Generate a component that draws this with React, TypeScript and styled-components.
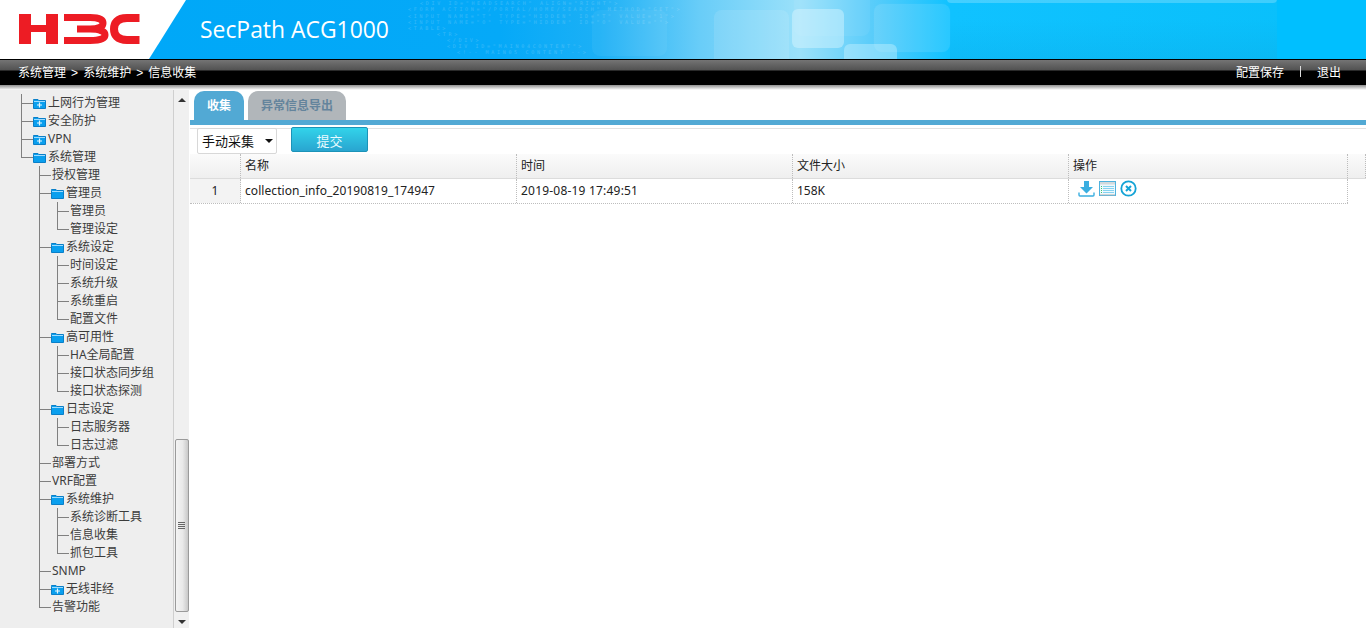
import React from "react";
import styled, { createGlobalStyle } from "styled-components";

const Global = createGlobalStyle`
  html, body { margin: 0; padding: 0; height: 100%; overflow: hidden; background: #fff; }
  body { font-family: "Noto Sans", "Noto Sans CJK SC", sans-serif; font-size: 12px; color: #222; }
  #root { height: 100%; }
`;

const Page = styled.div`
  display: flex;
  flex-direction: column;
  height: 628px;
  width: 1366px;
  overflow: hidden;
`;

const Banner = styled.header`
  position: relative;
  height: 59px;
  flex: none;
  background: #fff;
`;
const BannerArt = styled.svg`
  display: block;
`;
const ProductName = styled.h1`
  position: absolute;
  left: 200px;
  top: 13px;
  margin: 0;
  font: 400 22.9px/34px "Open Sans", sans-serif;
  color: #fff;
`;

const CrumbBar = styled.nav`
  flex: none;
  height: 26px;
  box-sizing: border-box;
  border-top: 1px solid #000;
  background: linear-gradient(#747474 0, #525252 10px, #000 11px, #000 100%);
  display: flex;
  align-items: center;
  justify-content: space-between;
  padding: 0 25px 0 18px;
  color: #fff;
  font-family: "Liberation Sans", "Noto Sans CJK SC", sans-serif;
  font-size: 12px;
`;
const Crumbs = styled.span`
  position: relative;
  top: -1px;
  word-spacing: 1.75px;
`;
const BarActions = styled.div`
  display: flex;
  align-items: center;
  position: relative;
  top: -1px;
`;
const Divider = styled.i`
  width: 1px;
  height: 11px;
  background: #ddd;
  margin: 0 16px;
`;
const Shade = styled.div`
  flex: none;
  height: 5px;
  background: linear-gradient(#8f8f8f, #fff);
`;

const Content = styled.div`
  flex: 1;
  display: flex;
  min-height: 0;
`;

const Side = styled.aside`
  width: 189px;
  flex: none;
  display: flex;
  background: #eeeeee;
  margin-right: 1px;
`;
const Tree = styled.ul`
  list-style: none;
  margin: 0;
  padding: 4px 0 0 21px;
  width: 152px;
  flex: none;
`;
const Row = styled.li`
  display: flex;
  height: 18px;
  line-height: 17px;
  color: #3c3c3c;
  font-size: 12px;
  white-space: nowrap;
`;
const Guide = styled.span<{ $line?: boolean }>`
  width: 18px;
  flex: none;
  box-sizing: border-box;
  border-left: ${(p) => (p.$line ? "1px solid #808080" : "0")};
`;
const Elbow = styled.span<{ $last?: boolean; $gap: number }>`
  position: relative;
  width: 12px;
  margin-right: ${(p) => p.$gap}px;
  flex: none;
  &::before {
    content: "";
    position: absolute;
    left: 0;
    top: 0;
    width: 1px;
    height: ${(p) => (p.$last ? "10px" : "18px")};
    background: #808080;
  }
  &::after {
    content: "";
    position: absolute;
    left: 0;
    top: 9px;
    width: 12px;
    height: 1px;
    background: #808080;
  }
`;
const FolderSvg = styled.svg`
  flex: none;
  margin: 4px 2px 0 0;
`;

const Scrollbar = styled.div`
  width: 16px;
  margin-left: auto;
  flex: none;
  display: flex;
  flex-direction: column;
  align-items: center;
  box-sizing: border-box;
  border-left: 1px solid #cfcfcf;
  background: #f0f0f0;
`;
const ArrowUp = styled.i`
  margin-top: 8px;
  width: 0;
  height: 0;
  border: 4px solid transparent;
  border-top: 0;
  border-bottom: 4px solid #333;
`;
const Thumb = styled.div`
  margin-top: 337px;
  width: 14px;
  height: 173px;
  flex: none;
  box-sizing: border-box;
  border: 1px solid #9a9a9a;
  border-radius: 2px;
  background: linear-gradient(90deg, #f3f3f3, #e9e9e9 55%, #c8c8c8);
  display: flex;
  flex-direction: column;
  justify-content: center;
  align-items: center;
  gap: 1px;
`;
const Grip = styled.i`
  width: 7px;
  height: 1px;
  background: #666;
`;
const ArrowDown = styled.i`
  margin-top: 8px;
  width: 0;
  height: 0;
  border: 4px solid transparent;
  border-bottom: 0;
  border-top: 4px solid #333;
`;

const Main = styled.main`
  flex: 1;
  min-width: 0;
  display: flex;
  flex-direction: column;
  padding-top: 1px;
`;
const Tabs = styled.div`
  height: 29px;
  display: flex;
  gap: 4px;
  padding-left: 4px;
  flex: none;
`;
const Tab = styled.div<{ $active?: boolean }>`
  width: ${(p) => (p.$active ? 50 : 98)}px;
  border-radius: 10px 10px 0 0;
  background: ${(p) => (p.$active ? "#52a9d4" : "#b1b6ba")};
  color: ${(p) => (p.$active ? "#fff" : "#64849c")};
  font-weight: 700;
  font-size: 12px;
  line-height: 30px;
  text-align: center;
`;
const TabRule = styled.div`
  height: 5px;
  flex: none;
  margin-bottom: 3px;
  background: #52a9d4;
`;
const Toolbar = styled.div`
  height: 26px;
  box-sizing: border-box;
  border-top: 1px solid #e2e2e2;
  flex: none;
  display: flex;
  padding-left: 7px;
  gap: 14px;
`;
const SelectBox = styled.div`
  width: 80px;
  height: 26px;
  margin-top: -1px;
  box-sizing: border-box;
  border: 1px solid #d8d8d8;
  border-radius: 2px;
  background: #fff;
  display: flex;
  align-items: center;
  justify-content: space-between;
  padding: 0 3px 2px 4px;
  font-size: 13px;
  color: #111;
`;
const Caret = styled.i`
  width: 0;
  height: 0;
  margin-top: 2px;
  border: 4px solid transparent;
  border-bottom: 0;
  border-top: 4px solid #111;
`;
const Submit = styled.button`
  width: 77px;
  height: 25px;
  margin-top: -2px;
  box-sizing: border-box;
  padding: 2px 0 0;
  border: 1px solid #1c93b8;
  border-radius: 2px;
  background: linear-gradient(#32d3ea, #29a5d0);
  color: #e8fbff;
  font: 400 13px "Noto Sans CJK SC", sans-serif;
`;

const HeadRow = styled.div`
  display: grid;
  grid-template-columns: 51px 276px 276px 276px 279px 18px;
  height: 25px;
  flex: none;
  box-sizing: border-box;
  background: linear-gradient(#fbfbfb, #efefef);
  border-bottom: 1px solid #dcdcdc;
`;
const HeadCell = styled.div`
  box-sizing: border-box;
  border-right: 1px dotted #bdbdbd;
  padding-left: 4px;
  line-height: 24px;
  color: #222;
`;
const DataRow = styled.div`
  display: grid;
  grid-template-columns: 51px 276px 276px 276px 279px;
  width: 1158px;
  height: 25px;
  flex: none;
  box-sizing: border-box;
  border-bottom: 1px dotted #bdbdbd;
`;
const IndexCell = styled.div`
  box-sizing: border-box;
  background: #f3f3f3;
  border-right: 1px dotted #bdbdbd;
  text-align: center;
  line-height: 24px;
`;
const Cell = styled.div<{ $track?: number }>`
  box-sizing: border-box;
  border-right: 1px dotted #bdbdbd;
  padding-left: 4px;
  line-height: 24px;
  color: #222;
  letter-spacing: ${(p) => p.$track ?? 0}px;
`;
const Actions = styled.div`
  box-sizing: border-box;
  border-right: 1px dotted #bdbdbd;
  padding: 1px 0 0 9px;
  display: flex;
  align-items: flex-start;
  gap: 4px;
`;

type Node = { t: string; l: 1 | 2 | 3; f?: "open" | "closed"; last?: boolean };
const nodes: Node[] = [
  { t: "上网行为管理", l: 1, f: "closed" },
  { t: "安全防护", l: 1, f: "closed" },
  { t: "VPN", l: 1, f: "closed" },
  { t: "系统管理", l: 1, f: "open", last: true },
  { t: "授权管理", l: 2 },
  { t: "管理员", l: 2, f: "open" },
  { t: "管理员", l: 3 },
  { t: "管理设定", l: 3, last: true },
  { t: "系统设定", l: 2, f: "open" },
  { t: "时间设定", l: 3 },
  { t: "系统升级", l: 3 },
  { t: "系统重启", l: 3 },
  { t: "配置文件", l: 3, last: true },
  { t: "高可用性", l: 2, f: "open" },
  { t: "HA全局配置", l: 3 },
  { t: "接口状态同步组", l: 3 },
  { t: "接口状态探测", l: 3, last: true },
  { t: "日志设定", l: 2, f: "open" },
  { t: "日志服务器", l: 3 },
  { t: "日志过滤", l: 3, last: true },
  { t: "部署方式", l: 2 },
  { t: "VRF配置", l: 2 },
  { t: "系统维护", l: 2, f: "open" },
  { t: "系统诊断工具", l: 3 },
  { t: "信息收集", l: 3 },
  { t: "抓包工具", l: 3, last: true },
  { t: "SNMP", l: 2 },
  { t: "无线非经", l: 2, f: "closed" },
  { t: "告警功能", l: 2, last: true },
];

const Folder = ({ plus }: { plus?: boolean }) => (
  <FolderSvg width="13" height="11" viewBox="0 0 13 11">
    <path d="M0.5 2.5 V1.5 H5 L5.8 2.5 H12.5 V10.5 H0.5 Z" fill="#0a9fee" stroke="#0a7fc8" strokeWidth="1" />
    <rect x="1" y="3" width="11" height="1" fill="#9fdcff" />
    {plus && <path d="M6.5 4.5 V9.5 M4 7 H9" stroke="#e6f7ff" strokeWidth="1.2" />}
  </FolderSvg>
);

const TreeRow = ({ n }: { n: Node }) => (
  <Row>
    {n.l >= 2 && <Guide />}
    {n.l === 3 && <Guide $line />}
    <Elbow $last={n.last} $gap={n.f ? 0 : n.l === 1 ? 2 : 1} />
    {n.f && <Folder plus={n.f === "closed"} />}
    <span>{n.t}</span>
  </Row>
);

const DownloadIcon = () => (
  <svg width="17" height="18" viewBox="0 0 17 18">
    <path d="M6 1 H11 V7 H15 L8.5 13.5 L2 7 H6 Z" fill="#3aaee0" />
    <path d="M1 12.5 V15 Q1 16 2 16 H15 Q16 16 16 15 V12.5" fill="none" stroke="#3aaee0" strokeWidth="1.4" />
  </svg>
);
const ListIcon = () => (
  <svg width="17" height="16" viewBox="0 0 17 16" style={{ marginTop: 1 }}>
    <rect x="0.5" y="0.5" width="16" height="14" fill="#eef9fd" stroke="#4fb2de" />
    <rect x="1" y="1" width="15" height="2.5" fill="#a9a9a9" opacity="0.4" />
    <path d="M4 5.5 H15 M4 7.5 H15 M4 9.5 H15 M4 11.5 H15" stroke="#86d2f0" strokeWidth="1" />
    <path d="M2 5.5 H3 M2 7.5 H3 M2 9.5 H3 M2 11.5 H3" stroke="#3fc46a" strokeWidth="1" />
    <rect x="1" y="13" width="15" height="1.5" fill="#bbb" opacity="0.6" />
  </svg>
);
const CloseIcon = () => (
  <svg width="17" height="17" viewBox="0 0 17 17">
    <circle cx="8.5" cy="8.5" r="7.2" fill="none" stroke="#14a3d6" strokeWidth="1.8" />
    <path d="M6 6 L11 11 M11 6 L6 11" stroke="#14a3d6" strokeWidth="2" />
  </svg>
);

const code = [
  [420, 5, '<DIV ID="HEADSEARCH" ALIGN="RIGHT">'],
  [408, 11, '<FORM ACTION="/PORTAL/HOME/SEARCH" METHOD="GET">'],
  [408, 17.5, '<INPUT NAME="T" TYPE="HIDDEN" ID="T" VALUE="1">'],
  [408, 24, '<INPUT NAME="O" TYPE="HIDDEN" ID="O" VALUE="">'],
  [408, 30, "<TABLE>"],
  [437, 36, "<TR>"],
  [447, 42, "</DIV>"],
  [447, 48, '<DIV ID="MAIN04CONTENT">'],
  [457, 54, "<!-- MAIN05 CONTENT -->"],
] as const;

const BannerDrawing = () => (
  <BannerArt width="1366" height="59" viewBox="0 0 1366 59">
    <defs>
      <linearGradient id="sky" x1="0" x2="1" y1="0" y2="0">
        <stop offset="0" stopColor="#00a8f8" />
        <stop offset="0.288" stopColor="#05a9f8" />
        <stop offset="0.37" stopColor="#1cb0f6" />
        <stop offset="0.453" stopColor="#69cdf8" />
        <stop offset="0.535" stopColor="#9be1fa" />
        <stop offset="0.592" stopColor="#5ccdfa" />
        <stop offset="0.658" stopColor="#10c2ff" />
        <stop offset="1" stopColor="#08bffa" />
      </linearGradient>
      <linearGradient id="low" x1="0" x2="0" y1="0" y2="1">
        <stop offset="0" stopColor="#0a9ed8" stopOpacity="0" />
        <stop offset="1" stopColor="#0a9ed8" stopOpacity="0.22" />
      </linearGradient>
    </defs>
    <path d="M186 0 H1366 V59 H149 Z" fill="url(#sky)" />
    <rect x="950" y="20" width="327" height="39" fill="url(#low)" />
    <rect x="1277" y="0" width="89" height="59" fill="#00bfff" />
    <rect x="592" y="10" width="75" height="46" rx="8" fill="#fff" opacity="0.05" />
    <rect x="714" y="10" width="75" height="60" rx="8" fill="#fff" opacity="0.1" stroke="#fff" strokeOpacity="0.12" />
    <rect x="794" y="-20" width="76" height="56" rx="8" fill="#fff" opacity="0.06" />
    <rect x="874" y="4" width="76" height="48" rx="8" fill="#fff" opacity="0.1" stroke="#fff" strokeOpacity="0.25" />
    <rect x="792" y="9" width="52" height="39" rx="6" fill="#e0f8ff" opacity="0.42" />
    <rect x="844" y="44" width="53" height="30" rx="6" fill="#e0f8ff" opacity="0.35" />
    <rect x="947" y="-8" width="330" height="11" rx="4" fill="#fff" opacity="0.22" />
    {code.map(([x, y, s]) => (
      <text key={y} x={x} y={y} fill="#fff" opacity="0.18" fontFamily="'DejaVu Sans Mono', monospace" fontSize="5" letterSpacing="2.7">
        {s}
      </text>
    ))}
    <g fill="none" stroke="#ed1c24">
      <path d="M25 14 V44 M52 14 V44" strokeWidth="12" />
      <path d="M25 28.5 H52" strokeWidth="7" />
      <path d="M64 17.5 H90 C99 17.5 103 20 103 23 C103 27 98 29 90 29 H77 M90 29 C100 29 105 31.5 105 35 C105 38.5 100 40.5 90 40.5 H64" strokeWidth="7" />
      <path d="M139.5 18 H127 C117 18 114 23 114 29 C114 35 117 40 127 40 H139.5" strokeWidth="8" />
    </g>
  </BannerArt>
);

export default function App() {
  return (
    <Page>
      <Global />
      <Banner>
        <BannerDrawing />
        <ProductName>SecPath ACG1000</ProductName>
      </Banner>
      <CrumbBar>
        <Crumbs>系统管理 &gt; 系统维护 &gt; 信息收集</Crumbs>
        <BarActions>
          <span>配置保存</span>
          <Divider />
          <span>退出</span>
        </BarActions>
      </CrumbBar>
      <Shade />
      <Content>
        <Side>
          <Tree>
            {nodes.map((n, i) => (
              <TreeRow key={i} n={n} />
            ))}
          </Tree>
          <Scrollbar>
            <ArrowUp />
            <Thumb>
              <Grip />
              <Grip />
              <Grip />
              <Grip />
            </Thumb>
            <ArrowDown />
          </Scrollbar>
        </Side>
        <Main>
          <Tabs>
            <Tab $active>收集</Tab>
            <Tab>异常信息导出</Tab>
          </Tabs>
          <TabRule />
          <Toolbar>
            <SelectBox>
              手动采集
              <Caret />
            </SelectBox>
            <Submit>提交</Submit>
          </Toolbar>
          <HeadRow>
            <HeadCell />
            <HeadCell>名称</HeadCell>
            <HeadCell>时间</HeadCell>
            <HeadCell>文件大小</HeadCell>
            <HeadCell>操作</HeadCell>
            <HeadCell />
          </HeadRow>
          <DataRow>
            <IndexCell>1</IndexCell>
            <Cell $track={0.07}>collection_info_20190819_174947</Cell>
            <Cell $track={0.2}>2019-08-19 17:49:51</Cell>
            <Cell>158K</Cell>
            <Actions>
              <DownloadIcon />
              <ListIcon />
              <CloseIcon />
            </Actions>
          </DataRow>
        </Main>
      </Content>
    </Page>
  );
}
